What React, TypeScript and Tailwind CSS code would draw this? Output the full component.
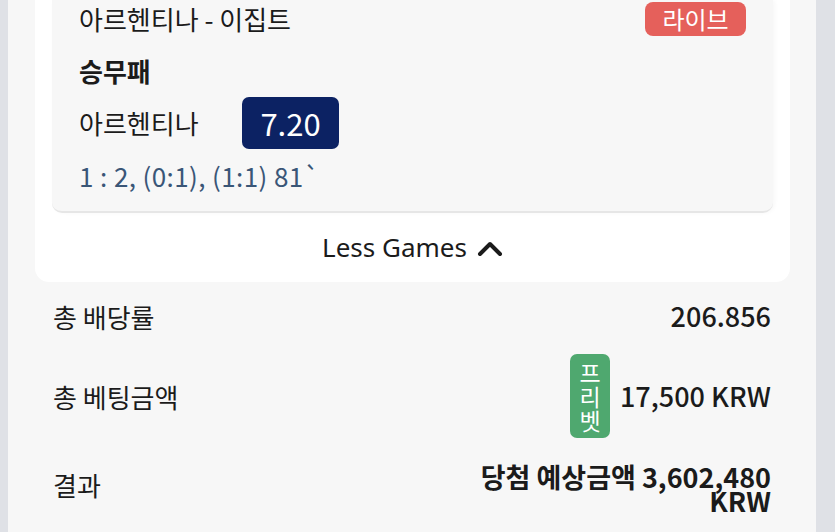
const kr = "font-['Noto_Sans_CJK_KR',sans-serif]";

interface SummaryRow {
  label: string;
  value: React.ReactNode;
}

function FreeBetBadge() {
  return (
    <div className="flex h-[84px] w-[40px] flex-col items-center justify-center rounded-[7px] bg-[#4fa86f] text-[23px] leading-[24px] text-white">
      <span>프</span>
      <span>리</span>
      <span>벳</span>
    </div>
  );
}

function Chevron() {
  return (
    <svg width="26" height="20" viewBox="0 0 26 20" fill="none" stroke="currentColor" strokeWidth="4" strokeLinecap="round" strokeLinejoin="round">
      <polyline points="3,16 13,6 23,16" />
    </svg>
  );
}

export default function App() {
  const rows: SummaryRow[] = [
    {
      label: "총 배당률",
      value: <span className="text-[27px] font-medium">206.856</span>,
    },
    {
      label: "총 베팅금액",
      value: (
        <div className="flex items-center gap-[10px]">
          <FreeBetBadge />
          <span className="text-[27px] font-medium">17,500 KRW</span>
        </div>
      ),
    },
  ];

  return (
    <div className={`flex h-[532px] w-[835px] overflow-hidden bg-[#dfe1e6] ${kr} text-[#1b1b1b]`}>
      <div className="ml-[8px] flex w-[808px] flex-col bg-[#f7f7f7]">
        {/* bet slip card */}
        <div className="ml-[27px] w-[755px] rounded-b-[14px] bg-white">
          <div className="ml-[17px] w-[721px] rounded-b-[10px] border-b-2 border-[#e6e6e6] bg-[#f7f7f7] px-[27px] pt-[2px] pb-[22px] shadow-[2px_0_4px_rgba(0,0,0,0.03)]">
            <div className="flex h-[34px] items-center justify-between">
              <span className="text-[26px] leading-none">아르헨티나 - 이집트</span>
              <span className="flex h-[34px] w-[101px] items-center justify-center rounded-[8px] bg-[#e5605b] text-[24px] text-white">
                라이브
              </span>
            </div>
            <div className="mt-[20px] text-[26px] font-bold leading-[30px]">승무패</div>
            <div className="mt-[11px] flex items-center">
              <span className="w-[163px] text-[26px] leading-none">아르헨티나</span>
              <span className="flex h-[52px] w-[97px] items-center justify-center rounded-[7px] bg-[#0c2263] text-[31px] text-white">
                7.20
              </span>
            </div>
            <div className="mt-[14px] text-[26px] leading-[26px] tracking-[0.4px] text-[#3a5677]">
              1 : 2, (0:1), (1:1) 81`
            </div>
          </div>
          <div className="flex h-[69px] items-center justify-center gap-[10px] font-['Noto_Sans',sans-serif] text-[26px] text-[#1b1b1b]">
            <span>Less Games</span>
            <Chevron />
          </div>
        </div>

        {/* totals */}
        <div className="flex flex-col px-[45px] text-[26px]">
          {rows.map((row, i) => (
            <div
              key={row.label}
              className={`flex items-center justify-between ${i === 0 ? "mt-[12px] h-[44px]" : "mt-[16px] h-[84px]"}`}
            >
              <span>{row.label}</span>
              {row.value}
            </div>
          ))}
          <div className="mt-[27px] flex items-center justify-between">
            <span className="-mt-[10px]">결과</span>
            <div className="flex flex-col items-end text-[27px] font-bold leading-[24px]">
              <span>당첨 예상금액 3,602,480</span>
              <span>KRW</span>
            </div>
          </div>
        </div>
      </div>
    </div>
  );
}
